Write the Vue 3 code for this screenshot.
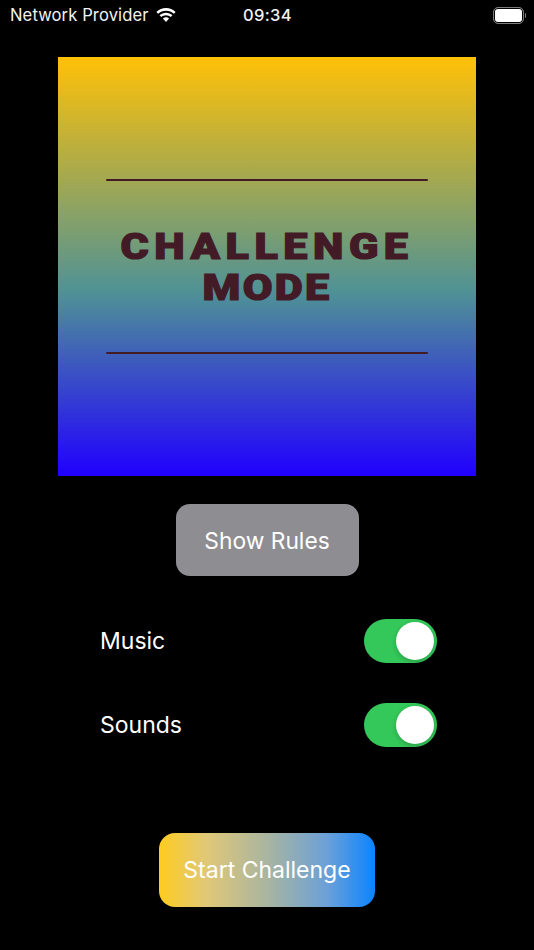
<script setup>
const settings = ['Music', 'Sounds']
</script>

<template>
  <div class="screen">
    <header class="status">
      <div class="left">
        <span>Network Provider</span>
        <svg class="wifi" viewBox="0 0 22 16" width="22" height="16">
          <path d="M11 3.700c3 0 5.800 1.100 7.900 3.100l1.700-1.800C18 2.500 14.600 1.100 11 1.100S4 2.500 1.400 5l1.700 1.800C5.200 4.800 8 3.700 11 3.700z" fill="#fff"/>
          <path d="M11 8.200c1.800 0 3.400.7 4.700 1.800l1.700-1.800C15.700 6.600 13.500 5.700 11 5.700S6.300 6.600 4.600 8.200L6.300 10c1.300-1.100 2.900-1.800 4.700-1.800z" fill="#fff"/>
          <path d="M11 10.300c-1.200 0-2.200.4-3.100 1.200L11 14.900l3.100-3.400c-.9-.8-1.900-1.200-3.100-1.200z" fill="#fff"/>
        </svg>
      </div>
      <span class="time">09:34</span>
      <div class="battery"><i class="cell"></i><i class="nub"></i></div>
    </header>

    <section class="hero">
      <div class="rule"></div>
      <h1 class="title"><span class="line wide">CHALLENGE</span><span class="line">MODE</span></h1>
      <div class="rule"></div>
    </section>

    <button class="rules">Show Rules</button>

    <div class="settings">
      <div v-for="s in settings" :key="s" class="row">
        <span>{{ s }}</span>
        <div class="toggle"><i class="knob"></i></div>
      </div>
    </div>

    <button class="start">Start Challenge</button>
  </div>
</template>

<style>
html, body { margin: 0; background: #000; }
</style>

<style scoped>
.screen {
  width: 534px;
  height: 950px;
  background: #000;
  color: #fff;
  font-family: Inter, "Liberation Sans", sans-serif;
  display: flex;
  flex-direction: column;
  align-items: center;
  overflow: hidden;
}
.status {
  width: 100%;
  box-sizing: border-box;
  height: 57px;
  padding: 4px 8px 0 10px;
  display: grid;
  grid-template-columns: 1fr auto 1fr;
  align-items: start;
  line-height: 22px;
  color: #f2f2f2;
}
.left { display: flex; align-items: center; gap: 6px; font-size: 16.600px; letter-spacing: 0.1px; }
.wifi { display: block; margin-top: -1px; }
.time { font-weight: 500; font-size: 16.500px; letter-spacing: 0.4px; margin-left: -1px; }
.battery { justify-self: end; display: flex; align-items: center; gap: 1px; height: 18px; margin-top: 2px; }
.cell {
  display: block;
  box-sizing: border-box;
  width: 31px;
  height: 17px;
  border: 1.500px solid #7d7d7d;
  border-radius: 5px;
  background: #fff;
  background-clip: padding-box;
  box-shadow: inset 0 0 0 1px #000;
}
.nub { display: block; width: 1.500px; height: 5px; background: #7d7d7d; border-radius: 0 2px 2px 0; }
.hero {
  width: 418px;
  height: 419px;
  flex: none;
  background: linear-gradient(180deg, #ffc107 0%, #4f9295 56%, #2000ff 100%);
  display: flex;
  flex-direction: column;
  align-items: center;
  justify-content: center;
}
.rule { width: 322px; height: 2px; background: #431b27; border-radius: 1px; }
.title {
  margin: 46px 0;
  height: 79px;
  width: 100%;
  font-family: Roboto, "Liberation Sans", sans-serif;
  font-weight: 900;
  font-size: 36px;
  line-height: 41px;
  text-align: center;
  color: #431b27;
  -webkit-text-stroke: 1.200px #431b27;
}
.line { display: block; letter-spacing: 1.900px; white-space: nowrap; transform: scaleX(1.2); }
.wide { letter-spacing: 4.600px; }
.rules {
  margin-top: 28px;
  width: 183px;
  height: 72px;
  flex: none;
  border: 0;
  border-radius: 14px;
  background: #8e8d92;
  color: #fff;
  font: 400 22.800px Inter, "Liberation Sans", sans-serif;
}
.settings {
  margin: 43px 0 0 3px;
  width: 337px;
  display: flex;
  flex-direction: column;
  gap: 40px;
}
.row {
  display: flex;
  justify-content: space-between;
  align-items: center;
  height: 44px;
  font-size: 23px;
}
.toggle {
  width: 73px;
  height: 44px;
  box-sizing: border-box;
  padding: 3px;
  border-radius: 22px;
  background: #34c759;
  display: flex;
  justify-content: flex-end;
}
.knob {
  display: block;
  width: 38px;
  height: 38px;
  border-radius: 50%;
  background: #fff;
  box-shadow: 0 2px 5px rgba(0, 0, 0, 0.2);
}
.start {
  margin-top: 86px;
  width: 216px;
  height: 74px;
  flex: none;
  border: 0;
  border-radius: 16px;
  background: linear-gradient(90deg, #ffcc1f 0%, #e0c878 22%, #a9b5a0 50%, #6ba0d8 78%, #0a84ff 100%);
  color: #fff;
  font: 400 23px Inter, "Liberation Sans", sans-serif;
}
</style>
